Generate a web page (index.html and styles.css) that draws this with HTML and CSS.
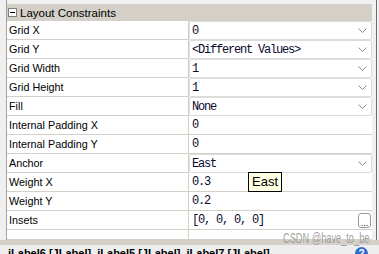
FILE: index.html
```html
<!DOCTYPE html>
<html lang="en">

<head>
    <meta charset="UTF-8" />
    <title>Layout Constraints</title>
    <link rel="stylesheet" href="styles.css">
</head>

<body>
    <div class="sheet">
        <div class="section-head">
            <span class="toggle"></span>
            <span>Layout Constraints</span>
        </div>

        <div class="props">
            <div class="row">
                <div class="name">Grid X</div>
                <div class="value combo"><span>0</span><svg class="arrow" width="9" height="5" viewBox="0 0 9 5"><polyline points="0.5,0.5 4.5,4.5 8.5,0.5" /></svg></div>
            </div>
            <div class="row">
                <div class="name">Grid Y</div>
                <div class="value combo"><span>&lt;Different Values&gt;</span><svg class="arrow" width="9" height="5" viewBox="0 0 9 5"><polyline points="0.5,0.5 4.5,4.5 8.5,0.5" /></svg></div>
            </div>
            <div class="row">
                <div class="name">Grid Width</div>
                <div class="value combo"><span>1</span><svg class="arrow" width="9" height="5" viewBox="0 0 9 5"><polyline points="0.5,0.5 4.5,4.5 8.5,0.5" /></svg></div>
            </div>
            <div class="row">
                <div class="name">Grid Height</div>
                <div class="value combo"><span>1</span><svg class="arrow" width="9" height="5" viewBox="0 0 9 5"><polyline points="0.5,0.5 4.5,4.5 8.5,0.5" /></svg></div>
            </div>
            <div class="row">
                <div class="name">Fill</div>
                <div class="value combo"><span>None</span><svg class="arrow" width="9" height="5" viewBox="0 0 9 5"><polyline points="0.5,0.5 4.5,4.5 8.5,0.5" /></svg></div>
            </div>
            <div class="row">
                <div class="name">Internal Padding X</div>
                <div class="value"><span>0</span></div>
            </div>
            <div class="row">
                <div class="name">Internal Padding Y</div>
                <div class="value"><span>0</span></div>
            </div>
            <div class="row">
                <div class="name">Anchor</div>
                <div class="value combo"><span>East</span><svg class="arrow" width="9" height="5" viewBox="0 0 9 5"><polyline points="0.5,0.5 4.5,4.5 8.5,0.5" /></svg></div>
            </div>
            <div class="row">
                <div class="name">Weight X</div>
                <div class="value"><span>0.3</span></div>
            </div>
            <div class="row">
                <div class="name">Weight Y</div>
                <div class="value"><span>0.2</span></div>
            </div>
            <div class="row">
                <div class="name">Insets</div>
                <div class="value"><span>[0, 0, 0, 0]</span><span class="more">...</span></div>
            </div>
            <div class="row blank">
                <div class="name"></div>
                <div class="value"></div>
            </div>
        </div>
    </div>

    <div class="status">
        <span>jLabel6 [JLabel], jLabel5 [JLabel], jLabel7 [JLabel]</span>
        <span class="help">?</span>
    </div>

    <div class="tooltip">East</div>
    <div class="watermark">CSDN @have_to_be</div>
</body>

</html>
```

FILE: styles.css
```css
body {
    margin: 0;
    width: 379px;
    height: 254px;
    overflow: hidden;
    background-color: #f0f0f0;
    font-family: "Liberation Sans", Arial, sans-serif;
    font-size: 11px;
    color: #000;
    position: relative;
}

.sheet {
    margin-left: 6px;
    width: 365px;
    padding-top: 4px;
    padding-right: 4px;
    border-left: 1px solid #a0a0a0;
    border-right: 1px solid #6f6f6f;
    background-color: #f0f0f0;
}

.section-head {
    height: 17px;
    background-color: #d4d0c8;
    display: flex;
    align-items: center;
    gap: 3px;
    padding-left: 1px;
    font-size: 11.5px;
}

.toggle {
    width: 7px;
    height: 7px;
    border: 1px solid #7f7f7f;
    background-color: #fff;
    position: relative;
}

.toggle::after {
    content: "";
    position: absolute;
    left: 1px;
    top: 3px;
    width: 5px;
    height: 1px;
    background-color: #000;
}

.props {
    background-color: #fff;
}

.row {
    display: grid;
    grid-template-columns: 182px 1fr;
    height: 19px;
}

.name {
    border-right: 1px solid #d4d0c8;
    border-bottom: 1px solid #d4d0c8;
    padding-left: 2px;
    display: flex;
    align-items: center;
    font-size: 10.8px;
}

.value {
    border-bottom: 1px solid #d4d0c8;
    display: flex;
    align-items: center;
    justify-content: space-between;
    padding-left: 3px;
    padding-right: 4px;
    font-family: "Liberation Mono", monospace;
    font-size: 12px;
    letter-spacing: -1.2px;
    color: #0a0a30;
}

.value.combo {
    border: 1px solid #dcdcdc;
    border-radius: 2px;
    padding-left: 2px;
}

.arrow {
    fill: none;
    stroke: #8a8a8a;
    stroke-width: 1;
}

.more {
    width: 11px;
    height: 13px;
    border: 1px solid #9a9a9a;
    border-radius: 3px;
    margin-right: -3px;
    font-family: "Liberation Sans", sans-serif;
    font-size: 9px;
    letter-spacing: 0;
    line-height: 18px;
    text-align: center;
    color: #000;
}

.row.blank {
    height: 10px;
}

.status {
    height: 14px;
    border-top: 5px solid #d4d0c8;
    background-color: #eeeeee;
    display: flex;
    justify-content: space-between;
    padding: 2px 11px 0 8px;
    font-weight: bold;
    font-size: 11px;
    line-height: 13px;
}

.help {
    width: 13px;
    height: 13px;
    border-radius: 50%;
    background-color: #2f6ad0;
    color: #fff;
    text-align: center;
    font-size: 10px;
}

.tooltip {
    position: absolute;
    left: 248px;
    top: 172px;
    width: 32px;
    height: 18px;
    border: 1px solid #000;
    background-color: #ffffe1;
    font-size: 13px;
    line-height: 18px;
    text-align: center;
}

.watermark {
    position: absolute;
    left: 283px;
    top: 230px;
    white-space: nowrap;
    font-size: 14px;
    color: rgba(150, 150, 150, 0.9);
    transform: scaleX(0.66);
    transform-origin: left top;
}
```
